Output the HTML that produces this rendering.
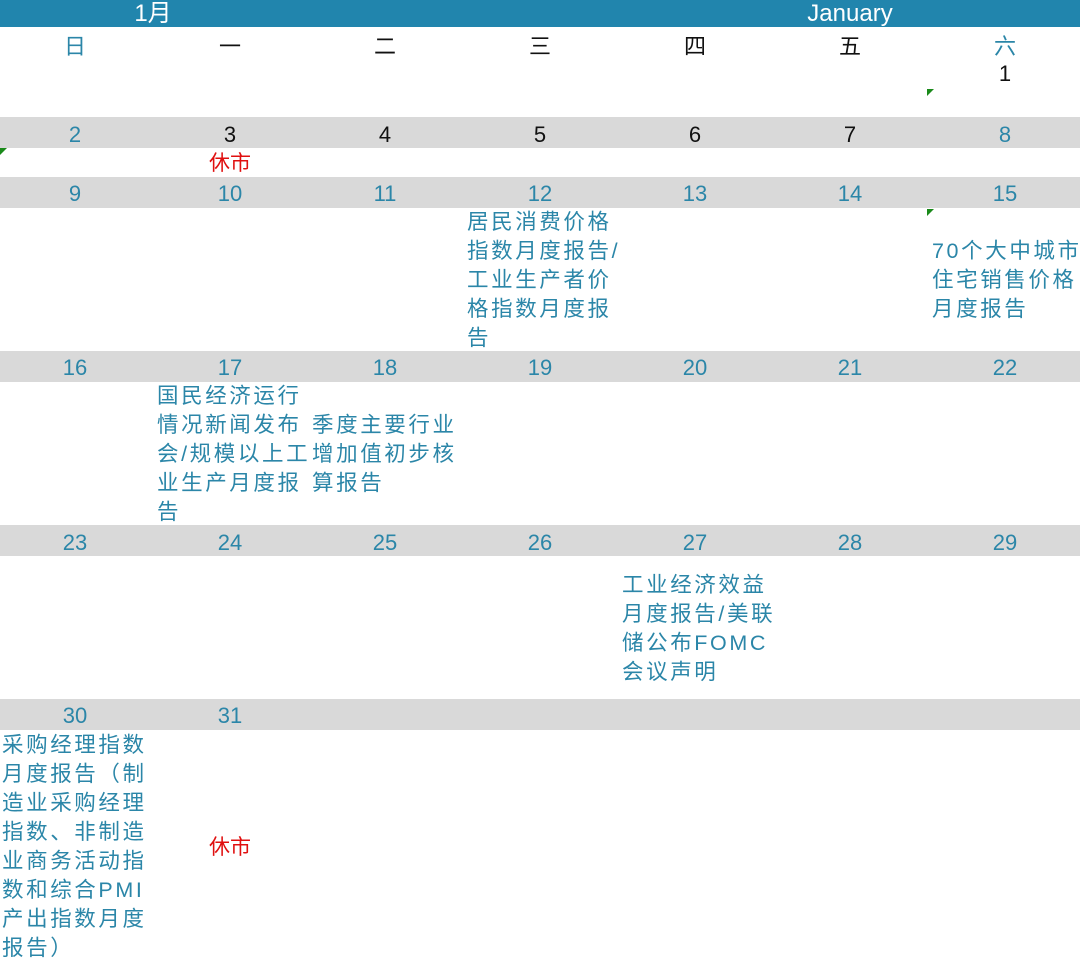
<!DOCTYPE html>
<html><head><meta charset="utf-8">
<style>
*{margin:0;padding:0;box-sizing:border-box}
body{width:1080px;height:957px;background:#fff;position:relative;overflow:hidden;font-family:"Liberation Sans","Noto Sans CJK SC",sans-serif}
.hdr{position:absolute;left:0;top:0;width:1080px;height:27px;background:#2185ad;color:#fff;font-size:24px}
.hdr span{position:absolute;top:0;line-height:27px;transform:translateX(-50%)}
.band{position:absolute;left:0;width:1080px;height:31px;background:#d9d9d9}
.c{position:absolute;transform:translate(-50%,-50%);font-size:22px;color:#2b86a8;white-space:nowrap;margin-top:2px}
.k{color:#111}
.r{color:#e01010;font-size:21px}
.ev{position:absolute;width:160px;display:flex;align-items:center;color:#2b86a8;font-size:21.5px;letter-spacing:2.6px;line-height:29px;white-space:nowrap;padding-top:2px}
.tri{position:absolute;width:0;height:0;border-top:7px solid #1a8a1a;border-right:7px solid transparent}
</style></head><body>
<div class="hdr"><span style="left:153px">1月</span><span style="left:850px">January</span></div>

<div class="c" style="left:75px;top:43px">日</div>
<div class="c k" style="left:230px;top:43px">一</div>
<div class="c k" style="left:385px;top:43px">二</div>
<div class="c k" style="left:540px;top:43px">三</div>
<div class="c k" style="left:695px;top:43px">四</div>
<div class="c k" style="left:850px;top:43px">五</div>
<div class="c" style="left:1005px;top:43px">六</div>
<div class="c k" style="left:1005px;top:72px">1</div>
<div class="tri" style="left:927px;top:89px"></div>

<div class="band" style="top:117px"></div>
<div class="c" style="left:75px;top:133px">2</div>
<div class="c k" style="left:230px;top:133px">3</div>
<div class="c k" style="left:385px;top:133px">4</div>
<div class="c k" style="left:540px;top:133px">5</div>
<div class="c k" style="left:695px;top:133px">6</div>
<div class="c k" style="left:850px;top:133px">7</div>
<div class="c" style="left:1005px;top:133px">8</div>
<div class="tri" style="left:0px;top:148px"></div>
<div class="c r" style="left:230px;top:160px">休市</div>

<div class="band" style="top:177px"></div>
<div class="c" style="left:75px;top:192px">9</div>
<div class="c" style="left:230px;top:192px">10</div>
<div class="c" style="left:385px;top:192px">11</div>
<div class="c" style="left:540px;top:192px">12</div>
<div class="c" style="left:695px;top:192px">13</div>
<div class="c" style="left:850px;top:192px">14</div>
<div class="c" style="left:1005px;top:192px">15</div>
<div class="tri" style="left:927px;top:209px"></div>
<div class="ev" style="left:467px;top:208px;height:143px">居民消费价格<br>指数月度报告/<br>工业生产者价<br>格指数月度报<br>告</div>
<div class="ev" style="left:932px;top:208px;height:143px">70个大中城市<br>住宅销售价格<br>月度报告</div>

<div class="band" style="top:351px"></div>
<div class="c" style="left:75px;top:366px">16</div>
<div class="c" style="left:230px;top:366px">17</div>
<div class="c" style="left:385px;top:366px">18</div>
<div class="c" style="left:540px;top:366px">19</div>
<div class="c" style="left:695px;top:366px">20</div>
<div class="c" style="left:850px;top:366px">21</div>
<div class="c" style="left:1005px;top:366px">22</div>
<div class="ev" style="left:157px;top:382px;height:143px">国民经济运行<br>情况新闻发布<br>会/规模以上工<br>业生产月度报<br>告</div>
<div class="ev" style="left:312px;top:382px;height:143px">季度主要行业<br>增加值初步核<br>算报告</div>

<div class="band" style="top:525px"></div>
<div class="c" style="left:75px;top:541px">23</div>
<div class="c" style="left:230px;top:541px">24</div>
<div class="c" style="left:385px;top:541px">25</div>
<div class="c" style="left:540px;top:541px">26</div>
<div class="c" style="left:695px;top:541px">27</div>
<div class="c" style="left:850px;top:541px">28</div>
<div class="c" style="left:1005px;top:541px">29</div>
<div class="ev" style="left:622px;top:556px;height:143px">工业经济效益<br>月度报告/美联<br>储公布FOMC<br>会议声明</div>

<div class="band" style="top:699px"></div>
<div class="c" style="left:75px;top:714px">30</div>
<div class="c" style="left:230px;top:714px">31</div>
<div class="ev" style="left:2px;top:730px;height:232px">采购经理指数<br>月度报告（制<br>造业采购经理<br>指数、非制造<br>业商务活动指<br>数和综合PMI<br>产出指数月度<br>报告）</div>
<div class="c r" style="left:230px;top:844px">休市</div>
</body></html>
